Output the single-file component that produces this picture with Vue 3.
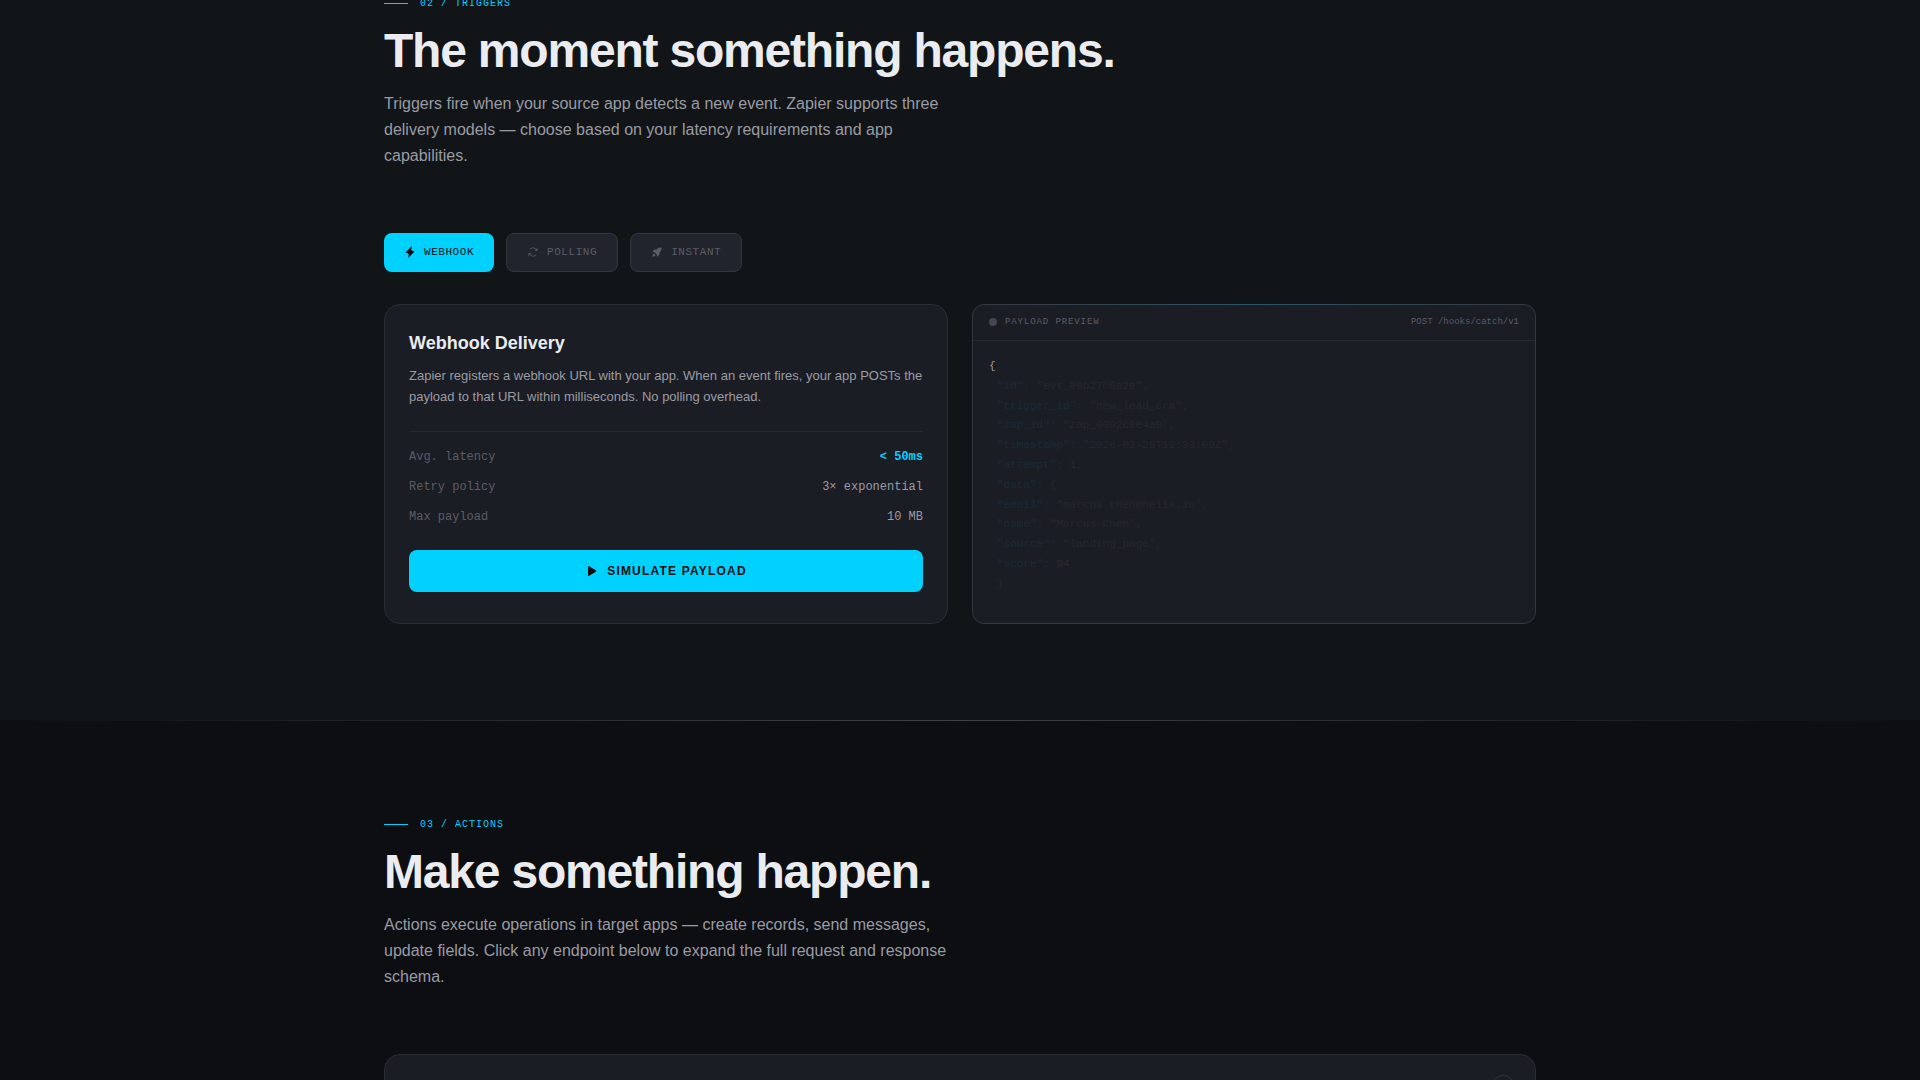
<template>
  <div class="page">
    <section class="section section-triggers">
      <div class="container">
        <header class="section-header">
          <div class="eyebrow">02 / TRIGGERS</div>
          <h2 class="section-title">The moment something happens.</h2>
          <p class="section-desc">
            Triggers fire when your source app detects a new event. Zapier supports three delivery
            models — choose based on your latency requirements and app capabilities.
          </p>
        </header>

        <div class="tabs">
          <button
            v-for="tab in tabs"
            :key="tab.id"
            type="button"
            class="tab"
            :class="{ active: tab.id === activeTab }"
            @click="activeTab = tab.id"
          >
            <svg class="icon" viewBox="0 0 256 256" aria-hidden="true">
              <path :d="tab.path" />
            </svg>
            {{ tab.label }}
          </button>
        </div>

        <div class="trigger-grid">
          <article class="card">
            <h3 class="card-title">Webhook Delivery</h3>
            <p class="card-desc">
              Zapier registers a webhook URL with your app. When an event fires, your app POSTs the
              payload to that URL within milliseconds. No polling overhead.
            </p>
            <dl class="specs">
              <div v-for="spec in specs" :key="spec.label" class="spec">
                <dt>{{ spec.label }}</dt>
                <dd :class="{ highlight: spec.highlight }">{{ spec.value }}</dd>
              </div>
            </dl>
            <button type="button" class="simulate-btn">
              <svg class="icon" viewBox="0 0 256 256" aria-hidden="true">
                <path d="M240,128a15.74,15.74,0,0,1-7.6,13.51L88.32,229.65a16,16,0,0,1-16.2.3A15.86,15.86,0,0,1,64,216.13V39.87a15.86,15.86,0,0,1,8.12-13.82,16,16,0,0,1,16.2.3L232.4,114.49A15.74,15.74,0,0,1,240,128Z" />
              </svg>
              SIMULATE PAYLOAD
            </button>
          </article>

          <div class="preview">
            <div class="preview-bar">
              <span class="preview-dot"></span>
              <span class="preview-name">PAYLOAD PREVIEW</span>
              <span class="preview-route">POST /hooks/catch/v1</span>
            </div>
            <div class="code">
              <div>{</div>
              <div v-for="line in payload" :key="line.key" class="code-line">
                <span class="key">"{{ line.key }}"</span>: <span :class="line.type">{{ line.value }}</span>{{ line.end }}
              </div>
              <div class="code-line">}</div>
            </div>
          </div>
        </div>
      </div>
    </section>

    <section class="section section-actions">
      <div class="container">
        <header class="section-header">
          <div class="eyebrow">03 / ACTIONS</div>
          <h2 class="section-title">Make something happen.</h2>
          <p class="section-desc">
            Actions execute operations in target apps — create records, send messages, update
            fields. Click any endpoint below to expand the full request and response schema.
          </p>
        </header>

        <div class="endpoint">
          <button type="button" class="endpoint-toggle" aria-label="Expand endpoint"></button>
        </div>
      </div>
    </section>
  </div>
</template>

<script setup>
import { ref } from 'vue'

const activeTab = ref('webhook')

const tabs = [
  {
    id: 'webhook',
    label: 'WEBHOOK',
    path: 'M213.85,125.46l-112,120a8,8,0,0,1-13.69-7L102.82,165.11l-57.63-21.61a8,8,0,0,1-3-13l112-120a8,8,0,0,1,13.69,7L153.18,90.9l57.63,21.61a8,8,0,0,1,3,12.95Z'
  },
  {
    id: 'polling',
    label: 'POLLING',
    path: 'M224,48V96a8,8,0,0,1-8,8H168a8,8,0,0,1,0-16h28.69L182.06,73.37a79.56,79.56,0,0,0-56.13-23.43h-.45A79.52,79.52,0,0,0,69.59,72.71,8,8,0,0,1,58.41,61.27a96,96,0,0,1,135,.79L208,76.69V48a8,8,0,0,1,16,0ZM186.41,183.29a80,80,0,0,1-112.47-.66L59.31,168H88a8,8,0,0,0,0-16H40a8,8,0,0,0-8,8v48a8,8,0,0,0,16,0V179.31l14.63,14.63A95.43,95.43,0,0,0,130,222.06h.53a95.36,95.36,0,0,0,67.07-27.33,8,8,0,0,0-11.18-11.44Z'
  },
  {
    id: 'instant',
    label: 'INSTANT',
    path: 'M224 32c-50-4-84 14-108 42L72 76 28 122l48 12 46 46 12 48 46-44 2-44c28-24 46-58 42-108ZM64 158c-22 8-32 30-32 66 36 0 58-10 66-32Z'
  }
]

const specs = [
  { label: 'Avg. latency', value: '< 50ms', highlight: true },
  { label: 'Retry policy', value: '3× exponential' },
  { label: 'Max payload', value: '10 MB' }
]

const payload = [
  { key: 'id', value: '"evt_09b27c8a2e"', type: 'string', end: ',' },
  { key: 'trigger_id', value: '"new_lead_crm"', type: 'string', end: ',' },
  { key: 'zap_id', value: '"zap_0092c8e4a0"', type: 'string', end: ',' },
  { key: 'timestamp', value: '"2026-02-28T12:33:00Z"', type: 'string', end: ',' },
  { key: 'attempt', value: '1', type: 'number', end: ',' },
  { key: 'data', value: '{', type: 'brace', end: '' },
  { key: 'email', value: '"marcus.chen@helix.io"', type: 'string', end: ',' },
  { key: 'name', value: '"Marcus Chen"', type: 'string', end: ',' },
  { key: 'source', value: '"landing_page"', type: 'string', end: ',' },
  { key: 'score', value: '94', type: 'number', end: '' }
]
</script>

<style>
body {
  background: #0d0e12;
}
</style>

<style scoped>
.page {
  height: 100vh;
  overflow: hidden;
  background: #0d0e12;
  color: #ebecef;
  font-family: "Liberation Sans", Arial, sans-serif;
  line-height: 1.6;
}

h2,
h3,
p,
dl,
dd {
  margin: 0;
}

button {
  cursor: pointer;
}

.section {
  padding: 96px 24px;
}

/* The page sits scrolled into the triggers section */
.section-triggers {
  margin-top: -101px;
  background: #111518;
}

.section-actions {
  padding-top: 95px;
  border-top: 1px solid transparent;
  background:
    linear-gradient(90deg, transparent, #3d4347, transparent) top / 100% 1px no-repeat border-box,
    #0d0e12;
}

.container {
  max-width: 1152px;
  margin: 0 auto;
}

.section-header {
  margin-bottom: 64px;
}

.eyebrow {
  display: flex;
  align-items: center;
  gap: 12px;
  margin-bottom: 15px;
  color: #00d1ff;
  font-family: "Liberation Mono", monospace;
  font-size: 10px;
  line-height: 17px;
  letter-spacing: 0.1em;
}

.eyebrow::before {
  content: "";
  width: 24px;
  height: 1px;
  background: #00d1ff;
}

.section-title {
  margin-bottom: 16px;
  font-size: 48px;
  font-weight: 700;
  line-height: 1;
  letter-spacing: -0.025em;
}

.section-desc {
  max-width: 580px;
  color: #9a9ba3;
  font-size: 16px;
  line-height: 26px;
}

.icon {
  width: 12px;
  height: 12px;
  fill: currentColor;
}

.tabs {
  display: flex;
  gap: 12px;
  margin-bottom: 32px;
}

.tab {
  display: flex;
  align-items: center;
  gap: 8px;
  padding: 12px 20px 13px;
  border: 1px solid #35373f;
  border-radius: 8px;
  background: #22242d;
  color: #5a5c66;
  font-family: "Liberation Mono", monospace;
  font-size: 11px;
  line-height: 12px;
  letter-spacing: 0.05em;
}

.tab.active {
  border: none;
  background: #00d1ff;
  color: #0d0e12;
}

.trigger-grid {
  display: grid;
  grid-template-columns: 1fr 1fr;
  gap: 24px;
  min-height: 320px;
}

.card {
  padding: 24px;
  border: 1px solid #2b2d35;
  border-radius: 16px;
  background: #1b1d25;
}

.card-title {
  margin-bottom: 8px;
  font-size: 18px;
  font-weight: 700;
}

.card-desc {
  margin-bottom: 24px;
  color: #9a9ba3;
  font-size: 13px;
}

.specs {
  display: flex;
  flex-direction: column;
  gap: 12px;
  margin-bottom: 24px;
  padding-top: 16px;
  border-top: 1px solid #272930;
  font-family: "Liberation Mono", monospace;
  font-size: 12px;
  line-height: 18px;
}

.spec {
  display: flex;
  justify-content: space-between;
}

.spec dt {
  color: #5a5c66;
}

.spec dd {
  color: #9a9ba3;
}

.spec dd.highlight {
  color: #00d1ff;
  font-weight: 700;
}

.simulate-btn {
  display: flex;
  align-items: center;
  justify-content: center;
  gap: 10px;
  width: 100%;
  padding: 14px;
  border: none;
  border-radius: 8px;
  background: #00d1ff;
  color: #0d0e12;
  font-family: inherit;
  font-size: 12px;
  font-weight: 700;
  line-height: 14px;
  letter-spacing: 0.1em;
}

.preview {
  position: relative;
  border: 1px solid #353840;
  border-radius: 12px;
  background: #1b1d25;
}

/* Glow along the top edge */
.preview::before {
  content: "";
  position: absolute;
  top: -1px;
  left: 12px;
  right: 12px;
  height: 1px;
  background: linear-gradient(90deg, transparent, rgba(0, 209, 255, 0.2), transparent);
}

.preview-bar {
  display: flex;
  align-items: center;
  gap: 8px;
  padding: 10px 16px 11px;
  border-bottom: 1px solid #272a31;
  color: #5a5c66;
  font-family: "Liberation Mono", monospace;
  font-size: 9px;
  line-height: 14px;
}

.preview-dot {
  width: 8px;
  height: 8px;
  border-radius: 50%;
  background: #454750;
}

.preview-name {
  letter-spacing: 0.1em;
}

.preview-route {
  margin-left: auto;
}

.code {
  padding: 16px;
  color: #9a9ba3;
  font-family: "Liberation Mono", monospace;
  font-size: 11px;
  line-height: 1.8;
}

.code-line {
  padding-left: 8px;
  opacity: 0.07;
}

.key {
  color: #00d1ff;
}

.string {
  color: #a8a890;
}

.number {
  color: #e0c060;
}

.endpoint {
  display: flex;
  justify-content: flex-end;
  padding: 20px;
  border: 1px solid #2b2d35;
  border-radius: 16px;
  background: #1b1d25;
}

.endpoint-toggle {
  width: 24px;
  height: 24px;
  padding: 0;
  border: 1px solid #35373f;
  border-radius: 50%;
  background: transparent;
}
</style>
